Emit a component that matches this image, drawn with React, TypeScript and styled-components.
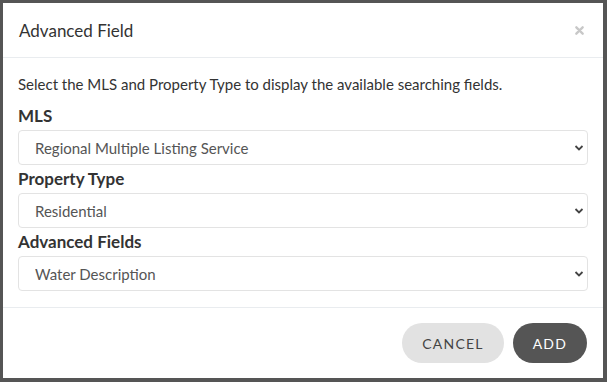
import React from "react";
import styled, { createGlobalStyle } from "styled-components";

const GlobalStyle = createGlobalStyle`
  html, body {
    margin: 0;
    padding: 0;
    background: #555555;
  }
  body {
    font-family: "Lato", "Noto Sans", sans-serif;
  }
`;

const Backdrop = styled.div`
  width: 607px;
  height: 382px;
  box-sizing: border-box;
  padding: 3px 4px 4px 3px;
  background: #555555;
`;

const Dialog = styled.div`
  width: 100%;
  height: 100%;
  background: #fff;
  display: flex;
  flex-direction: column;
`;

const Header = styled.div`
  flex-shrink: 0;
  height: 55px;
  box-sizing: border-box;
  padding: 0 18px 0 16px;
  display: flex;
  align-items: center;
  justify-content: space-between;
  border-bottom: 1px solid #e9ecef;
`;

const Title = styled.h5`
  margin: 0;
  font-size: 17px;
  font-weight: 400;
  color: #333;
`;

const Close = styled.button`
  border: none;
  background: none;
  padding: 0;
  width: 12px;
  height: 12px;
  display: flex;
  align-items: center;
  justify-content: center;
  cursor: pointer;
`;

const Body = styled.div`
  flex-shrink: 0;
  padding: 16px 15px 0 15px;
  display: flex;
  flex-direction: column;
`;

const Intro = styled.p`
  margin: 0 0 11px 0;
  font-size: 15px;
  color: #333;
  line-height: 20px;
`;

const Label = styled.label`
  font-size: 17px;
  font-weight: 700;
  color: #333;
  line-height: 22px;
  margin-bottom: 3px;
`;

const SelectWrap = styled.div`
  position: relative;
  margin-bottom: 3px;
`;

const Select = styled.select`
  width: 100%;
  height: 35px;
  box-sizing: border-box;
  appearance: none;
  border: 1px solid #e3e3e3;
  border-radius: 4px;
  background: #fff;
  padding: 0 30px 0 16px;
  font-family: "Lato", "Noto Sans", sans-serif;
  font-size: 15px;
  color: #555;
`;

const Chevron = styled.svg`
  position: absolute;
  right: 4px;
  top: 50%;
  transform: translateY(-50%);
  pointer-events: none;
`;

const Footer = styled.div`
  flex-shrink: 0;
  margin-top: auto;
  border-top: 1px solid #e9ecef;
  height: 71px;
  box-sizing: border-box;
  display: flex;
  align-items: center;
  justify-content: flex-end;
  gap: 9px;
  padding: 0 16px 0 0;
`;

const PillButton = styled.button<{ $primary?: boolean }>`
  height: 40px;
  border: none;
  border-radius: 20px;
  padding: 0 20px;
  font-family: "Lato", "Noto Sans", sans-serif;
  font-size: 14px;
  letter-spacing: 1.2px;
  background: ${(p) => (p.$primary ? "#555555" : "#e2e2e2")};
  color: ${(p) => (p.$primary ? "#fff" : "#444")};
  cursor: pointer;
`;

const fields = [
  { label: "MLS", value: "Regional Multiple Listing Service" },
  { label: "Property Type", value: "Residential" },
  { label: "Advanced Fields", value: "Water Description" },
];

export default function App() {
  return (
    <>
      <GlobalStyle />
      <Backdrop>
        <Dialog>
          <Header>
            <Title>Advanced Field</Title>
            <Close aria-label="Close">
              <svg width="9" height="9" viewBox="0 0 10 10">
                <path d="M1.5 1.5L8.5 8.5M8.5 1.5L1.5 8.5" stroke="#c8c8c8" strokeWidth="2.6" strokeLinecap="round" />
              </svg>
            </Close>
          </Header>
          <Body>
            <Intro>Select the MLS and Property Type to display the available searching fields.</Intro>
            {fields.map((f) => (
              <React.Fragment key={f.label}>
                <Label>{f.label}</Label>
                <SelectWrap>
                  <Select defaultValue={f.value}>
                    <option>{f.value}</option>
                  </Select>
                  <Chevron width="10" height="7" viewBox="0 0 10 7">
                    <path d="M1.5 1.5L5 5L8.5 1.5" fill="none" stroke="#444" strokeWidth="1.8" />
                  </Chevron>
                </SelectWrap>
              </React.Fragment>
            ))}
          </Body>
          <Footer>
            <PillButton>CANCEL</PillButton>
            <PillButton $primary>ADD</PillButton>
          </Footer>
        </Dialog>
      </Backdrop>
    </>
  );
}
